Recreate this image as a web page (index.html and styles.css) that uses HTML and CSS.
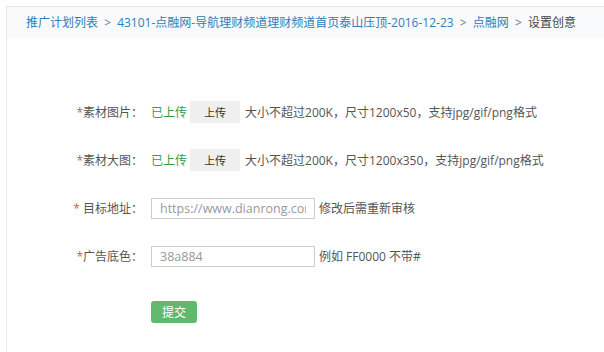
FILE: index.html
```html
<!DOCTYPE html>
<html lang="zh-CN">
<head>
    <meta charset="UTF-8">
    <title>设置创意</title>
    <link rel="stylesheet" href="styles.css">
</head>
<body>
    <div class="panel">
        <!-- Breadcrumb -->
        <div class="breadcrumb">
            <a href="#">推广计划列表</a>
            <span class="sep">&gt;</span>
            <a href="#">43101-点融网-导航理财频道理财频道首页泰山压顶-2016-12-23</a>
            <span class="sep">&gt;</span>
            <a href="#">点融网</a>
            <span class="sep">&gt;</span>
            <span class="current">设置创意</span>
        </div>

        <!-- Form -->
        <form class="form">
            <div class="form-row">
                <label class="form-label"><span class="star">*</span>素材图片：</label>
                <span class="uploaded">已上传</span>
                <button type="button" class="upload-btn">上传</button>
                <span class="hint">大小不超过200K，尺寸1200x50，支持jpg/gif/png格式</span>
            </div>
            <div class="form-row">
                <label class="form-label"><span class="star">*</span>素材大图：</label>
                <span class="uploaded">已上传</span>
                <button type="button" class="upload-btn">上传</button>
                <span class="hint">大小不超过200K，尺寸1200x350，支持jpg/gif/png格式</span>
            </div>
            <div class="form-row">
                <label class="form-label"><span class="star">*</span> 目标地址：</label>
                <input type="text" class="text-input" value="https://www.dianrong.com">
                <span class="hint">修改后需重新审核</span>
            </div>
            <div class="form-row">
                <label class="form-label"><span class="star">*</span>广告底色：</label>
                <input type="text" class="text-input" value="38a884">
                <span class="hint">例如 FF0000 不带#</span>
            </div>
            <div class="form-row submit-row">
                <span class="form-label"></span>
                <button type="button" class="submit-btn">提交</button>
            </div>
        </form>
    </div>
</body>
</html>
```

FILE: styles.css
```css
* {
    margin: 0;
    padding: 0;
    box-sizing: border-box;
}

body {
    background-color: #ffffff;
    color: #555555;
    font-family: 'Open Sans', 'Noto Sans CJK SC', sans-serif;
    font-size: 12px;
    padding: 6px 0 0 6px;
    height: 100vh;
    overflow: hidden;
}

.panel {
    border-top: 1px solid #e8e8e8;
    border-left: 1px solid #e8e8e8;
    height: 100%;
}

/* Breadcrumb */
.breadcrumb {
    height: 31px;
    padding: 2px 0 0 19px;
    line-height: 28px;
    background-color: #f9fafb;
    white-space: nowrap;
}

.breadcrumb a {
    color: #2d7fb8;
    text-decoration: none;
}

.breadcrumb .sep {
    color: #777;
    margin: 0 3px;
}

.breadcrumb .current {
    color: #444;
}

/* Form */
.form {
    padding-top: 50px;
}

.form-row {
    display: flex;
    align-items: center;
    height: 48px;
}

.form-label {
    width: 136px;
    margin-right: 8px;
    text-align: right;
    color: #555;
    white-space: pre;
}

.star {
    color: #d9534f;
}

.uploaded {
    color: #3b9a4b;
    margin-right: 3px;
}

.upload-btn {
    width: 50px;
    height: 22px;
    border: none;
    background-color: #efefef;
    color: #333;
    font-family: inherit;
    font-size: 11px;
    margin-right: 5px;
}

.hint {
    color: #555;
}

.text-input {
    width: 164px;
    height: 21px;
    border: 1px solid #cccccc;
    padding: 0 8px;
    font-family: inherit;
    font-size: 12.5px;
    color: #999;
    margin-right: 4px;
    outline: none;
}

.submit-row {
    margin-top: 8px;
}

.submit-btn {
    width: 46px;
    height: 22px;
    border: none;
    border-radius: 3px;
    background-color: #60b96f;
    color: #ffffff;
    font-family: inherit;
    font-size: 12px;
}
```
